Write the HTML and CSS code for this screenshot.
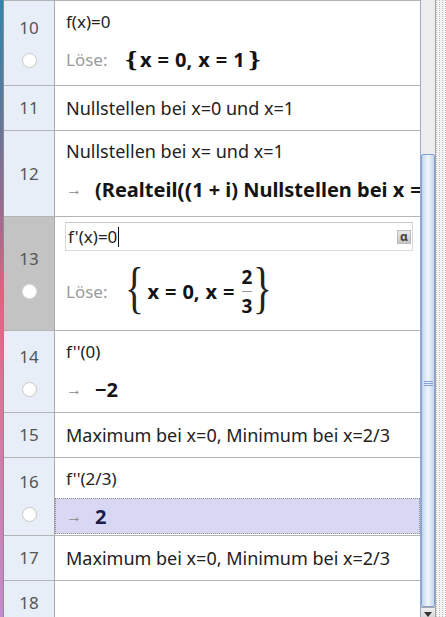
FILE: index.html
```html
<!DOCTYPE html>
<html lang="de">
<head>
<meta charset="utf-8">
<title>CAS</title>
<link rel="stylesheet" href="styles.css">
</head>
<body>
<div class="app">
  <div class="strip"></div>
  <div class="table">
    <div class="row h84">
      <div class="hdr"><span class="num">10</span><span class="radio"></span></div>
      <div class="cell">
        <div class="line">f(x)=0</div>
        <div class="line"><span class="lbl">Löse:</span><span class="math"><span class="br">{</span>x<span class="mo">=</span>0<span class="comma">,</span>x<span class="mo">=</span>1<span class="br end">}</span></span></div>
      </div>
    </div>
    <div class="row h44">
      <div class="hdr"><span class="num">11</span></div>
      <div class="cell single"><div class="line txt">Nullstellen bei x=0 und x=1</div></div>
    </div>
    <div class="row h85">
      <div class="hdr"><span class="num">12</span></div>
      <div class="cell">
        <div class="line txt">Nullstellen bei x= und x=1</div>
        <div class="line"><span class="arr">→</span><span class="math">(Realteil<span class="pp">((</span>1<span class="mo sm">+</span>i) Nullstellen bei x<span class="mo">=</span></span></div>
      </div>
    </div>
    <div class="row h113">
      <div class="hdr sel"><span class="num">13</span><span class="radio plain"></span></div>
      <div class="cell edit">
        <div class="input"><span class="itext">f'(x)=0</span><span class="caret"></span><span class="alpha">α</span></div>
        <div class="line tall"><span class="lbl">Löse:</span><span class="math"><span class="big">{</span>x<span class="mo">=</span>0<span class="comma">,</span>x<span class="mo">=</span><span class="frac"><span class="nu">2</span><span class="de">3</span></span><span class="big">}</span></span></div>
      </div>
    </div>
    <div class="row h81">
      <div class="hdr"><span class="num">14</span><span class="radio"></span></div>
      <div class="cell">
        <div class="line">f''(0)</div>
        <div class="line"><span class="arr">→</span><span class="math">−2</span></div>
      </div>
    </div>
    <div class="row h44">
      <div class="hdr"><span class="num">15</span></div>
      <div class="cell single"><div class="line txt">Maximum bei x=0, Minimum bei x=2/3</div></div>
    </div>
    <div class="row h77">
      <div class="hdr"><span class="num">16</span><span class="radio"></span></div>
      <div class="cell">
        <div class="line">f''(2/3)</div>
        <div class="line hl"><span class="arr">→</span><span class="math navy">2</span></div>
      </div>
    </div>
    <div class="row h44">
      <div class="hdr"><span class="num">17</span></div>
      <div class="cell single"><div class="line txt">Maximum bei x=0, Minimum bei x=2/3</div></div>
    </div>
    <div class="row last">
      <div class="hdr"><span class="num">18</span></div>
      <div class="cell"></div>
    </div>
  </div>
  <div class="scroll">
    <div class="track"><div class="thumb"><span class="grip"></span></div></div>
    <div class="btn"><span class="tri"></span></div>
  </div>
  <div class="split"></div>
</div>
</body>
</html>
```

FILE: styles.css
```css
* { box-sizing: border-box; margin: 0; padding: 0; }
html, body { width: 446px; height: 617px; overflow: hidden; background: #fff; }
body { font-family: "Noto Sans", "Open Sans", sans-serif; color: #222; }

.app { display: flex; height: 617px; }

.strip {
  width: 4px; flex: none;
  border-right: 1px solid #8c8c8c;
  background: linear-gradient(to bottom, #2f88ad 0%, #5e7898 18%, #9a6c90 34%, #e2607f 47%, #e36f95 62%, #d27cb0 80%, #c28ccb 100%);
}

.table {
  width: 416px; flex: none;
  border-top: 1px solid #b4b4b4;
  display: flex; flex-direction: column;
  overflow: hidden;
}

.row { display: flex; flex: none; border-bottom: 1px solid #b4b4b4; }
.h44 { height: 45px; }
.h77 { height: 78px; }
.h81 { height: 82px; }
.h84 { height: 85px; }
.h85 { height: 86px; }
.h113 { height: 114px; }
.row.last { flex: 1; border-bottom: 0; }

.hdr {
  width: 51px; flex: none;
  background: #e7eef8;
  border-right: 1px solid #a9a9a9;
  display: flex; flex-direction: column; align-items: center; justify-content: center;
  gap: 15px;
}
.row.last .hdr { justify-content: flex-start; padding-top: 12px; }
.hdr.sel { background: #c3c3c3; }
.num { font-size: 17px; line-height: 20px; color: #555; }
.radio {
  width: 15px; height: 15px; border-radius: 50%;
  background: #fff; border: 1px solid #c6c6c6;
}
.radio.plain { border-color: #e4e4e4; }

.cell {
  flex: 1; min-width: 0;
  display: flex; flex-direction: column; gap: 2px;
  padding-top: 2px;
  overflow: hidden;
}
.cell.single { justify-content: center; padding-top: 0; }
.line {
  height: 36px; flex: none;
  display: flex; align-items: center;
  padding-left: 11px;
  white-space: nowrap;
  font-size: 17px;
}
.line.txt { font-size: 18px; }
.line.tall { height: 60px; }

.lbl { color: #9a9a9a; font-size: 17px; margin-right: 17px; }
.arr { color: #8a8a8a; font-size: 16px; margin-right: 13px; }

.math { display: inline-flex; align-items: center; font-weight: 700; font-size: 20px; color: #141414; }
.math.navy { color: #1c1c4a; }
.mo { margin: 0 6px; }
.mo.sm { margin: 0 5px; }
.comma { margin-right: 6px; }
.br { font-family: "DejaVu Serif", serif; font-weight: 700; font-size: 21px; margin-right: 2px; }
.br.end { margin-left: 3px; margin-right: 0; }
.pp { font-size: 22px; }

.big {
  font-family: "Liberation Serif", serif; font-weight: 400;
  font-size: 56px; line-height: 56px; margin-top: -6px;
  transform: scaleX(0.7);
  margin-left: -3px; margin-right: -1px;
  color: #222;
}
.frac { display: inline-flex; flex-direction: column; align-items: center; font-size: 19px; line-height: 20px; margin: 0 0 0 1px; }
.frac .nu { padding-bottom: 4px; }
.frac .de { border-top: 1px solid #999; padding-top: 4px; }

.hl {
  background: #d8d8f4;
  border: 1px dotted #8a8a8a;
  padding-left: 10px;
}

.edit { padding-top: 5px; gap: 10px; }
.input {
  height: 29px; width: 348px; margin-left: 10px; flex: none;
  border: 1px solid #d9d9d9; border-top-color: #c8c8c8;
  display: flex; align-items: center;
  padding-left: 2px;
  font-size: 17px;
}
.caret { width: 1px; height: 20px; background: #111; margin-left: 1px; }
.alpha {
  margin-left: auto; margin-right: 1px;
  width: 14px; height: 14px;
  background: linear-gradient(#ececec, #c4c4c4);
  border: 1px solid #bdbdbd;
  font-size: 12px; line-height: 11px; font-weight: 700; color: #444;
  display: flex; justify-content: center;
}

.scroll {
  width: 16px; flex: none;
  border-left: 1px solid #98abcc;
  border-right: 1px solid #a4a4a4;
  background: #ededed;
  display: flex; flex-direction: column;
}
.track { flex: 1; display: flex; flex-direction: column; }
.thumb {
  margin-top: 154px; height: 453px;
  border: 1px solid #86a2d4; border-radius: 2px;
  background: linear-gradient(90deg, #c2d5ef, #f1f6fc 50%, #c6d7ee);
  display: flex; align-items: center; justify-content: center;
}
.grip {
  width: 9px; height: 5px; margin-top: 6px;
  background: repeating-linear-gradient(#86a2d4 0 1px, transparent 1px 2px);
}
.btn {
  height: 10px; flex: none;
  background: linear-gradient(#f0f0f0, #d8d8d8);
  border-top: 1px solid #a8a8a8;
  display: flex; justify-content: center; padding-top: 4px;
}
.tri {
  width: 0; height: 0;
  border-left: 4px solid transparent; border-right: 4px solid transparent;
  border-top: 5px solid #333;
}

.split {
  width: 10px; flex: none;
  background-color: #f3f3f3;
  background-image: linear-gradient(90deg, transparent 1px, #f3f3f3 1px), linear-gradient(#c0c0c0 1px, transparent 1px);
  background-size: 3px 2px;
}
```
